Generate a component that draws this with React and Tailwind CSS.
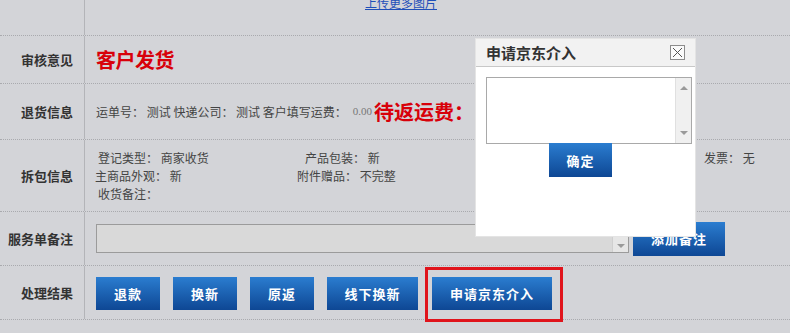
import React from 'react';

const FONT = { fontFamily: '"Noto Sans CJK SC", "Liberation Sans", sans-serif' };

const BlueButton = ({ children, className = '' }) => (
  <button
    className={`h-[33px] bg-gradient-to-b from-[#2b7dd0] to-[#0e4794] text-white text-[13px] font-bold tracking-[1px] leading-none ${className}`}
  >
    {children}
  </button>
);

const Row = ({ label, className = '', children }) => (
  <div className={`flex border-b border-dotted border-[#a9aaae] ${className}`}>
    <div className="w-[85px] shrink-0 border-r border-[#b3b4b8] flex items-center justify-end pr-[11px] text-[13px] font-bold text-[#333]">
      {label}
    </div>
    <div className="flex-1 min-w-0 pl-[11px] flex items-center">{children}</div>
  </div>
);

const ScrollArrow = ({ up }) => (
  <svg width="8" height="5" viewBox="0 0 8 5">
    <path d={up ? 'M0 5 L4 1 L8 5 Z' : 'M0 0 L4 4 L8 0 Z'} fill="#9a9a9a" />
  </svg>
);

export default function App() {
  return (
    <div className="relative w-[790px] h-[333px] overflow-hidden bg-[#d3d4d8] text-[#444]" style={FONT}>
      {/* top row with upload link, cut by the page top */}
      <Row label="" className="h-[36px]">
        <div className="flex-1 flex justify-center items-start self-start -mt-[5px] pr-[84px]">
          <a className="text-[12px] text-[#1f4fb8] underline leading-4">上传更多图片</a>
        </div>
      </Row>

      <Row label="审核意见" className="h-[48px]">
        <span className="text-[20px] font-bold text-[#d8000a] tracking-[-0.5px]">客户发货</span>
      </Row>

      <Row label="退货信息" className="h-[56px]">
        <div className="flex items-center text-[12px] text-[#444] whitespace-nowrap">
          <span className="pr-[2px]">运单号： 测试 快递公司： 测试 客户填写运费：</span>
          <span className="ml-[4px] text-[11px] text-[#777]" style={{ fontFamily: '"Liberation Serif", serif' }}>0.00</span>
          <span className="ml-[2px] text-[20px] font-bold text-[#d8000a]">待返运费：</span>
        </div>
      </Row>

      <Row label="拆包信息" className="h-[72px]">
        <div className="w-full text-[12px] leading-[18px] text-[#444] whitespace-nowrap -ml-[1px]">
          <div className="flex">
            <span className="w-[210px] pl-[3px]">登记类型： 商家收货</span>
            <span className="w-[399px]">产品包装： 新</span>
            <span>发票： 无</span>
          </div>
          <div className="flex">
            <span className="w-[202px]">主商品外观： 新</span>
            <span>附件赠品： 不完整</span>
          </div>
          <div className="flex">
            <span className="pl-[3px]">收货备注：</span>
          </div>
        </div>
      </Row>

      <Row label="服务单备注" className="h-[54px]">
        <div className="flex items-center gap-[4px]">
          <div className="w-[533px] h-[29px] bg-[#d9d9d9] border border-[#9b9b9b] flex justify-end">
            <div className="w-[16px] h-full bg-[#e6e6e6] border-l border-[#cfcfcf] flex flex-col justify-between items-center py-[3px]">
              <ScrollArrow up />
              <ScrollArrow />
            </div>
          </div>
          <BlueButton className="w-[92px] h-[34px]">添加备注</BlueButton>
        </div>
      </Row>

      <Row label="处理结果" className="h-[54px]">
        <div className="flex items-center gap-[13px] pt-[1px]">
          <BlueButton className="w-[64px]">退款</BlueButton>
          <BlueButton className="w-[64px]">换新</BlueButton>
          <BlueButton className="w-[64px]">原返</BlueButton>
          <BlueButton className="w-[91px]">线下换新</BlueButton>
          <div className="relative ml-[1px]">
            <BlueButton className="w-[120px]">申请京东介入</BlueButton>
            <div className="absolute -left-[7px] -top-[10px] -right-[11px] -bottom-[12px] border-[3px] border-[#e0141c] pointer-events-none" />
          </div>
        </div>
      </Row>

      {/* dialog */}
      <div className="absolute left-[475px] top-[38px] w-[221px] h-[199px] bg-white border border-[#e4e4e4] flex flex-col">
        <div className="h-[28px] bg-[#f2f2f2] border-b border-[#c8c8c8] flex items-center justify-between pl-[10px] pr-[10px]">
          <span className="text-[15px] font-bold text-[#333] leading-none">申请京东介入</span>
          <div className="w-[15px] h-[15px] border border-[#8c8c8c] bg-[#fafafa] flex items-center justify-center">
            <svg width="11" height="11" viewBox="0 0 11 11">
              <path d="M1 1 L10 10 M10 1 L1 10" stroke="#555" strokeWidth="1" />
            </svg>
          </div>
        </div>
        <div className="flex-1 flex flex-col items-start pt-[10px] pl-[10px]">
          <div className="w-[206px] h-[67px] border border-[#a9a9a9] flex justify-end">
            <div className="w-[16px] h-full bg-[#f0f0f0] border-l border-[#e0e0e0] flex flex-col justify-between items-center py-[7px]">
              <ScrollArrow up />
              <ScrollArrow />
            </div>
          </div>
          <BlueButton className="w-[63px] h-[34px] -mt-[1px] ml-[63px]">确定</BlueButton>
        </div>
      </div>
    </div>
  );
}
